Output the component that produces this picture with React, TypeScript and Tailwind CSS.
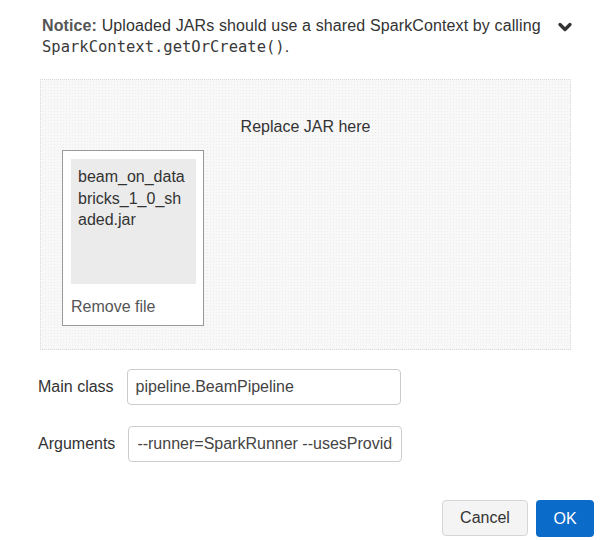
import { ChevronDown } from 'lucide-react';

const sans = { fontFamily: '"Liberation Sans", Arial, sans-serif' };

export default function App() {
    return (
        <div className="w-[604px] h-[540px] bg-white text-[#333] text-[16px] overflow-hidden" style={sans}>
            {/* Notice */}
            <div className="flex items-start pl-[42px] pr-[29px] pt-[15px]">
                <p className="flex-1 leading-[21px] tracking-[0.12px]">
                    <span className="font-bold text-[#555]">Notice:</span> Uploaded JARs should use a shared SparkContext by calling{' '}
                    <code className="font-['DejaVu_Sans_Mono','Liberation_Mono',monospace] text-[15.5px] tracking-normal text-[#3a3a3a]">SparkContext.getOrCreate()</code>.
                </p>
                <ChevronDown className="w-[20px] h-[20px] mt-[2px] text-[#333]" strokeWidth={4} />
            </div>

            {/* Drop zone */}
            <div className="ml-[40px] mr-[33px] mt-[21px] h-[271px] border border-dotted border-[#d9d9d9] bg-[#f8f8f8] bg-[radial-gradient(#ececec_0.6px,transparent_0.8px)] bg-[length:3px_3px] pt-[36px] pl-[21px]">
                <div className="text-center pr-[21px] leading-[21px]">Replace JAR here</div>
                <div className="mt-[13px] w-[142px] h-[176px] border border-[#999] bg-white pt-[8px] pl-[8px]">
                    <div className="w-[125px] h-[125px] bg-[#ebebeb] px-[7px] pt-[7px] leading-[21.5px] break-all">
                        beam_on_databricks_1_0_shaded.jar
                    </div>
                    <div className="mt-[12px] text-[#555] leading-[21px]">Remove file</div>
                </div>
            </div>

            {/* Form */}
            <div className="pl-[38px] mt-[19px] flex flex-col gap-[21px]">
                <div className="flex items-center gap-[13px]">
                    <span>Main class</span>
                    <input
                        readOnly
                        value="pipeline.BeamPipeline"
                        className="w-[274px] h-[36px] border border-[#ccc] rounded-[4px] px-[8px] text-[#444] outline-none"
                    />
                </div>
                <div className="flex items-center gap-[13px]">
                    <span>Arguments</span>
                    <input
                        readOnly
                        value="--runner=SparkRunner --usesProvidedSparkContext"
                        className="w-[274px] h-[36px] border border-[#ccc] rounded-[4px] px-[8px] text-[#444] outline-none"
                    />
                </div>
            </div>

            {/* Buttons */}
            <div className="flex justify-end gap-[8px] pr-[10px] mt-[38px]">
                <button className="w-[86px] h-[36px] rounded-[4px] border border-[#d6d6d6] bg-[#f4f4f4] text-[#333]">Cancel</button>
                <button className="w-[58px] h-[37px] rounded-[4px] bg-[#0b6bc8] text-white">OK</button>
            </div>
        </div>
    );
}
